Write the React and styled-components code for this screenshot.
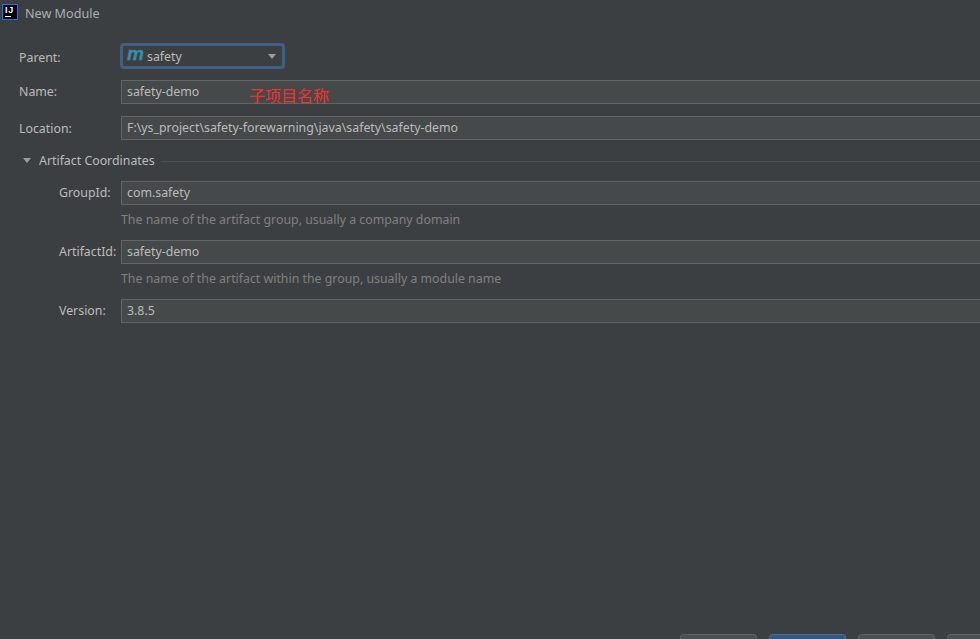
import React from "react";
import styled, { createGlobalStyle } from "styled-components";

const GlobalStyle = createGlobalStyle`
  html, body {
    margin: 0;
    padding: 0;
    background: #3c3f41;
    overflow: hidden;
  }
`;

const Page = styled.div`
  position: relative;
  display: flex;
  flex-direction: column;
  width: 980px;
  height: 639px;
  overflow: hidden;
  background: #3c3f41;
  color: #bbbbbb;
  font-family: "Noto Sans", "Open Sans", sans-serif;
  font-size: 12.35px;
`;

const TitleBar = styled.div`
  display: flex;
  align-items: center;
  gap: 7px;
  height: 26px;
  padding-left: 2px;
  color: #a9b0b5;
  font-size: 12.6px;
`;

const AppIcon = styled.div`
  position: relative;
  box-sizing: border-box;
  width: 16px;
  height: 16px;
  margin-top: -2px;
  background: #000;
  border: 1px solid #087cfa;
  color: #fff;
  font: bold 9px/9px "Liberation Sans", sans-serif;
  padding: 1px 0 0 2px;
  letter-spacing: 0.8px;

  &::after {
    content: "";
    position: absolute;
    left: 2px;
    bottom: 2px;
    width: 6px;
    height: 1px;
    background: #fff;
  }
`;

const Form = styled.div`
  display: flex;
  flex-direction: column;
  padding-left: 19px;
`;

const Row = styled.div`
  display: flex;
  align-items: center;
  margin-top: ${(props) => props.top || 0}px;
  padding-left: ${(props) => props.indent || 0}px;
`;

const Label = styled.div`
  flex: none;
  width: ${(props) => 102 - (props.indent || 0)}px;
  margin-top: ${(props) => props.nudge || 0}px;
`;

const Field = styled.div`
  flex: 1;
  box-sizing: border-box;
  height: 24px;
  line-height: 21px;
  padding-left: 5px;
  margin-right: -20px;
  background: #45494a;
  border: 1px solid #646464;
`;

const Combo = styled.div`
  display: flex;
  align-items: center;
  box-sizing: border-box;
  width: 165px;
  height: 26px;
  margin-left: -1px;
  padding: 0 6px 0 4px;
  background: #3c3f41;
  border: 3px solid #3d6185;
  border-radius: 4px;
`;

const MavenMark = styled.span`
  width: 20px;
  margin-top: -4px;
  font: italic 900 19px/20px "Liberation Sans", sans-serif;
  color: #3a8ba5;
  letter-spacing: -1px;
  -webkit-text-stroke: 0.4px #3a8ba5;
`;

const ComboArrow = styled.span`
  margin-left: auto;
  margin-right: 0;
  border-left: 4.5px solid transparent;
  border-right: 4.5px solid transparent;
  border-top: 5px solid #9a9d9f;
`;

const Section = styled.div`
  display: flex;
  align-items: center;
  height: 18px;
  margin-top: 12px;
  padding-left: 4px;
`;

const SectionArrow = styled.span`
  margin-right: 8px;
  margin-top: -1px;
  border-left: 4.5px solid transparent;
  border-right: 4.5px solid transparent;
  border-top: 5px solid #9a9d9f;
`;

const SectionTitle = styled.span`
  margin-top: -2px;
`;

const SectionLine = styled.span`
  flex: 1;
  height: 1px;
  margin-left: 6px;
  background: #515151;
`;

const Hint = styled.div`
  box-sizing: border-box;
  height: 35px;
  padding: 6px 0 0 102px;
  line-height: 17px;
  color: #808080;
`;

const Note = styled.div`
  position: absolute;
  left: 249px;
  top: 85px;
  font: 400 16px/20px "Noto Sans CJK SC", sans-serif;
  color: #f5302c;
`;

const Footer = styled.div`
  display: flex;
  gap: 12px;
  margin-top: auto;
  height: 5px;
  padding-left: 680px;
`;

const Button = styled.div`
  flex: none;
  box-sizing: border-box;
  width: 77px;
  height: 26px;
  border-radius: 3px;
  background: ${(props) => (props.primary ? "#365880" : "#4c5052")};
  border: 1px solid ${(props) => (props.primary ? "#4c708c" : "#5e6060")};
`;

export default function App() {
  return (
    <Page>
      <GlobalStyle />
      <TitleBar>
        <AppIcon>IJ</AppIcon>
        New Module
      </TitleBar>
      <Form>
        <Row top={17}>
          <Label nudge={2}>Parent:</Label>
          <Combo>
            <MavenMark>m</MavenMark>
            safety
            <ComboArrow />
          </Combo>
        </Row>
        <Row top={11}>
          <Label nudge={-2}>Name:</Label>
          <Field>safety-demo</Field>
        </Row>
        <Row top={12}>
          <Label>Location:</Label>
          <Field>F:\ys_project\safety-forewarning\java\safety\safety-demo</Field>
        </Row>
        <Section>
          <SectionArrow />
          <SectionTitle>Artifact Coordinates</SectionTitle>
          <SectionLine />
        </Section>
        <Row top={11} indent={40}>
          <Label indent={40} nudge={-2}>GroupId:</Label>
          <Field>com.safety</Field>
        </Row>
        <Hint>The name of the artifact group, usually a company domain</Hint>
        <Row indent={40}>
          <Label indent={40} nudge={-2}>ArtifactId:</Label>
          <Field>safety-demo</Field>
        </Row>
        <Hint>The name of the artifact within the group, usually a module name</Hint>
        <Row indent={40}>
          <Label indent={40} nudge={-2}>Version:</Label>
          <Field>3.8.5</Field>
        </Row>
      </Form>
      <Note>子项目名称</Note>
      <Footer>
        <Button />
        <Button primary />
        <Button />
        <Button />
      </Footer>
    </Page>
  );
}
